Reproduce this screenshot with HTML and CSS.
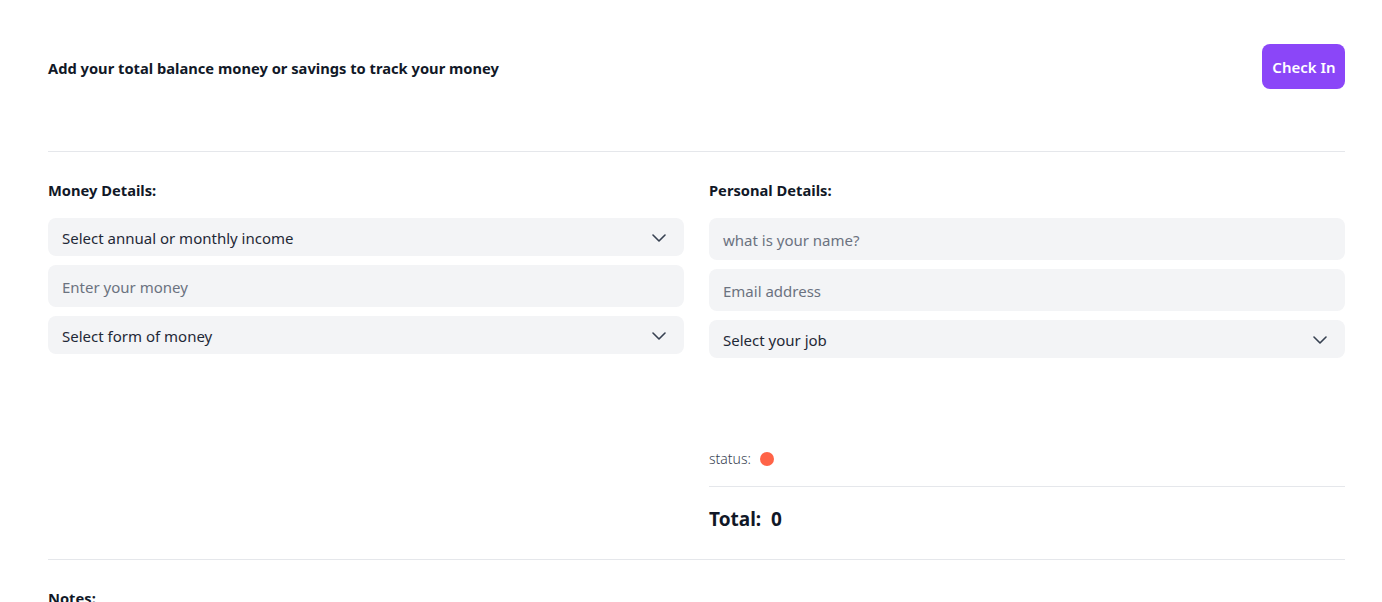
FILE: index.html
```html
<!DOCTYPE html>
<html lang="en">
<head>
<meta charset="utf-8">
<title>Money Tracker</title>
<link rel="stylesheet" href="styles.css">
</head>
<body>
<div class="page">
  <header class="header">
    <h1 class="headline">Add your total balance money or savings to track your money</h1>
    <button class="checkin">Check In</button>
  </header>
  <hr class="divider top">
  <section class="columns">
    <div class="col">
      <h2 class="section-title">Money Details:</h2>
      <div class="fields">
        <div class="field select">
          <span>Select annual or monthly income</span>
          <svg class="chev" width="14" height="8" viewBox="0 0 14 8"><polyline points="1,1 7,7 13,1" fill="none" stroke="#374151" stroke-width="1.6" stroke-linecap="round" stroke-linejoin="round"/></svg>
        </div>
        <div class="field input placeholder">Enter your money</div>
        <div class="field select">
          <span>Select form of money</span>
          <svg class="chev" width="14" height="8" viewBox="0 0 14 8"><polyline points="1,1 7,7 13,1" fill="none" stroke="#374151" stroke-width="1.6" stroke-linecap="round" stroke-linejoin="round"/></svg>
        </div>
      </div>
    </div>
    <div class="col">
      <h2 class="section-title">Personal Details:</h2>
      <div class="fields">
        <div class="field input placeholder">what is your name?</div>
        <div class="field input placeholder">Email address</div>
        <div class="field select">
          <span>Select your job</span>
          <svg class="chev" width="14" height="8" viewBox="0 0 14 8"><polyline points="1,1 7,7 13,1" fill="none" stroke="#374151" stroke-width="1.6" stroke-linecap="round" stroke-linejoin="round"/></svg>
        </div>
      </div>
      <div class="status">
        <span>status:</span>
        <span class="dot"></span>
      </div>
      <hr class="divider small">
      <div class="total">Total:&nbsp; 0</div>
    </div>
  </section>
  <hr class="divider">
  <h2 class="section-title notes">Notes:</h2>
</div>
</body>
</html>
```

FILE: styles.css
```css
* { box-sizing: border-box; }
html, body { margin: 0; padding: 0; background: #fff; }
body {
  font-family: "Noto Sans", "Open Sans", sans-serif;
  color: #111827;
}
.page {
  padding: 44px 37px 0 48px;
}
.header {
  display: flex;
  justify-content: space-between;
  align-items: center;
  height: 45px;
}
.headline {
  margin: 0;
  padding-top: 3px;
  font-size: 14.7px;
  font-weight: 700;
  line-height: 20px;
}
.checkin {
  width: 83px;
  height: 45px;
  border: 0;
  border-radius: 8px;
  background: #8b46f8;
  color: #fff;
  font-family: inherit;
  font-size: 15px;
  font-weight: 600;
  padding: 0 0 0 1px;
}
.divider {
  border: 0;
  border-top: 1px solid #e5e7eb;
  margin: 0;
  height: 0;
}
.divider.top { margin-top: 62px; }
.columns {
  display: grid;
  grid-template-columns: 1fr 1fr;
  column-gap: 25px;
  padding-top: 28px;
}
.section-title {
  margin: 0;
  font-size: 14.7px;
  font-weight: 700;
  line-height: 20px;
}
.fields {
  display: flex;
  flex-direction: column;
  gap: 9px;
  margin-top: 18px;
}
.field {
  background: #f3f4f6;
  border-radius: 8px;
  padding: 0 14px;
  font-size: 15px;
  display: flex;
  align-items: center;
  padding-top: 1px;
}
.select {
  height: 38px;
  justify-content: space-between;
  color: #1f2937;
  padding-right: 18px;
}
.input { height: 42px; }
.placeholder { color: #6b7280; }
.status {
  display: flex;
  align-items: center;
  gap: 9px;
  margin-top: 90px;
  height: 20px;
  font-size: 14px;
  color: #374151;
  font-weight: 300;
}
.dot {
  width: 14px;
  height: 14px;
  border-radius: 50%;
  background: #ff6347;
  margin-top: 2px;
}
.divider.small { margin-top: 18px; }
.total {
  margin-top: 18px;
  font-size: 19px;
  font-weight: 700;
  line-height: 28px;
  padding-bottom: 26px;
}
.notes { margin-top: 28px; }
```
